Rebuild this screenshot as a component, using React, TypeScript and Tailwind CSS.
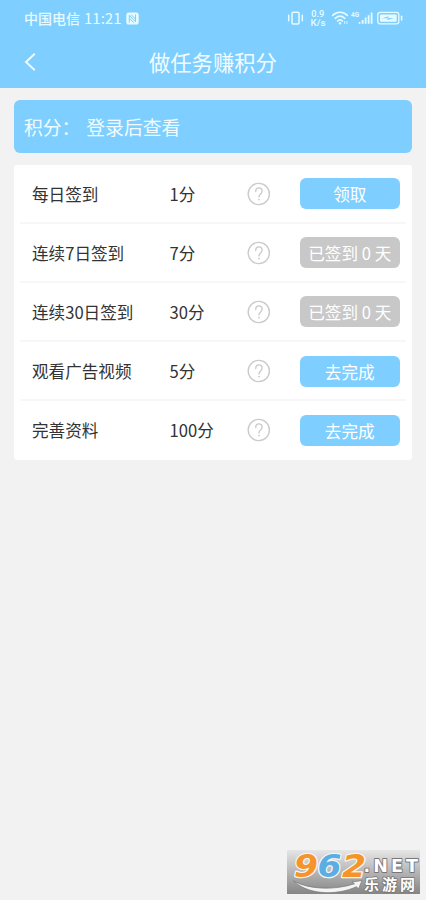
type Task = {
  name: string
  points: number
  action: string
  disabled?: boolean
}

const tasks: Task[] = [
  { name: "每日签到", points: 1, action: "领取" },
  { name: "连续7日签到", points: 7, action: "已签到 0 天", disabled: true },
  { name: "连续30日签到", points: 30, action: "已签到 0 天", disabled: true },
  { name: "观看广告视频", points: 5, action: "去完成" },
  { name: "完善资料", points: 100, action: "去完成" },
]

function StatusIcons() {
  return (
    <svg width="118" height="20" viewBox="286 8 118 20" fill="none" stroke="#e6fbff" strokeLinecap="round">
      {/* vibrate */}
      <rect x="292" y="12.3" width="7" height="11.6" rx="1.2" strokeWidth="1.5" />
      <path d="M288.7 15.2v5.6M302.3 15.2v5.6" strokeWidth="1.5" />
      {/* network speed */}
      <g fill="#e6fbff" stroke="none" fontFamily="Roboto, sans-serif" fontWeight="500">
        <text x="311.3" y="16.6" fontSize="9" textLength="13" lengthAdjust="spacingAndGlyphs">0.9</text>
        <text x="310.5" y="26.2" fontSize="9" textLength="15" lengthAdjust="spacingAndGlyphs">K/s</text>
        <text x="351" y="17" fontSize="7" fontWeight="700" textLength="8" lengthAdjust="spacingAndGlyphs">4G</text>
      </g>
      {/* wifi */}
      <path d="M332.7 15.3c4.3-4.1 10.3-4.1 14.6 0M335.2 18.3c2.9-2.6 6.7-2.6 9.6 0M337.6 21c1.5-1.4 3.3-1.4 4.8 0" strokeWidth="1.7" />
      <circle cx="340" cy="23.2" r="1.2" fill="#e6fbff" stroke="none" />
      <path d="M344.7 21.5v2M346.9 21.5v2" strokeWidth=".9" />
      {/* signal */}
      <path d="M359.5 22v1.8M362.6 20v3.8M365.6 17.6v6.2M368.6 15.2v8.6M371.6 12.5v11.3" strokeWidth="1.8" strokeLinecap="butt" />
      {/* battery */}
      <rect x="377.8" y="12.3" width="21" height="11.6" rx="2.4" strokeWidth="1.3" />
      <rect x="380" y="14.5" width="16.6" height="7.2" rx=".8" fill="#e6fbff" stroke="none" />
      <path d="M382 18.3l6.7-2-.7 1.6h6l-6.7 2.2.6-1.8z" fill="#7ecfff" stroke="none" />
      <path d="M401.6 16.2v3.8" strokeWidth="1.6" />
    </svg>
  )
}

function NfcIcon() {
  return (
    <svg className="ml-[5px]" width="13" height="13" viewBox="0 0 13 13" fill="none">
      <rect x=".3" y=".5" width="12.4" height="12" rx="2.6" fill="#e6fbff" />
      <path d="M3.3 10.6V3.2l6.2 6.6V2.4M5.2 2.6l4.3 4.6M3.3 6l4.3 4.600" stroke="#7ecfff" strokeWidth="1" />
    </svg>
  )
}

function HelpIcon() {
  return (
    <svg width="24" height="24" viewBox="0 0 24 24" fill="none" stroke="#cbcbcb" strokeLinecap="round">
      <circle cx="11.8" cy="12" r="10.6" strokeWidth="1.4" />
      <path d="M8.7 9.5c0-2.2 1.3-3.6 3.2-3.6s3.2 1.3 3.2 3.2c0 1.5-.8 2.2-1.7 3.1-.9.8-1.4 1.5-1.4 2.7" strokeWidth="1.4" />
      <circle cx="12" cy="17.6" r=".9" fill="#cbcbcb" stroke="none" />
    </svg>
  )
}

function TaskRow({ task }: { task: Task }) {
  return (
    <div className="mx-1.5 flex h-[59.2px] items-center border-b-2 border-[#f7f7f7] pt-px pl-3 text-[16.6px] text-[#333] last:border-transparent">
      <span className="w-[137.5px] pt-px">{task.name}</span>
      <span className="w-[77px] pt-px">{task.points}分</span>
      <HelpIcon />
      <button
        className={`ml-[29px] h-[31px] w-[100.5px] rounded-[6px] pt-px text-[16.6px] leading-[30px] whitespace-nowrap text-white ${task.disabled ? "bg-[#c8c8c8]" : "bg-[#7ecfff]"}`}
      >
        {task.action}
      </button>
    </div>
  )
}

function SiteBadge() {
  return (
    <svg className="absolute top-[850px] left-[287px] overflow-visible" width="133" height="44" viewBox="0 0 133 44">
      <defs>
        <linearGradient id="plate" x1="0" y1="0" x2="0" y2="1">
          <stop offset="0" stopColor="#e6e6e6" />
          <stop offset="1" stopColor="#858585" />
        </linearGradient>
      </defs>
      <rect width="133" height="44" fill="url(#plate)" />
      <path d="M6.500 31c15 8.500 41 9.500 61 2.800l-2.500-1.800 10-1.500-3.500 8.500-2-2.300C48 46.500 20 44 6.500 31z" fill="#f4f4f4" stroke="#777" strokeWidth=".7" />
      <g fontFamily="'DejaVu Sans', sans-serif" fontWeight="700" paintOrder="stroke" strokeLinejoin="round">
        <g fontSize="32" fontStyle="italic" stroke="#f5f5f5" strokeWidth="2.500">
          <text x="7" y="27.3" textLength="24" lengthAdjust="spacingAndGlyphs" fill="#f79428">9</text>
          <text x="30.5" y="27.3" textLength="24" lengthAdjust="spacingAndGlyphs" fill="#5aaee3">6</text>
          <text x="55" y="27.3" textLength="24" lengthAdjust="spacingAndGlyphs" fill="#f79428">2</text>
        </g>
        <text x="76.5" y="21.700" fontSize="17.500" textLength="54.500" fill="#fff" stroke="#777" strokeWidth="1.8">.NET</text>
        <text x="77" y="39.5" fontSize="15" textLength="51" fontFamily="'Noto Sans CJK SC', sans-serif" fill="#fff" stroke="#777" strokeWidth="1.6">乐游网</text>
      </g>
    </svg>
  )
}

export default function App() {
  return (
    <div className="relative h-[900px] w-[426px] overflow-hidden bg-[#f2f2f2] font-['Noto_Sans_CJK_SC',sans-serif]">
      <header className="h-[87.5px] bg-[#7ecfff] text-[#e6fbff]">
        <div className="flex h-9 items-center pl-6 text-[14px] font-medium">
          <span>中国电信</span>
          <span className="ml-1 text-[15px] font-normal">11:21</span>
          <NfcIcon />
          <div className="mr-[22px] ml-auto">
            <StatusIcons />
          </div>
        </div>
        <div className="flex h-[52px] items-center pl-6">
          <svg width="12" height="18" viewBox="0 0 12 18" fill="none" stroke="#f0fcff" strokeWidth="1.9">
            <path d="M10.8 .8L2 9l8.8 8.2" />
          </svg>
          <h1 className="ml-[113px] text-[21.3px] text-[#f0fcff]">做任务赚积分</h1>
        </div>
      </header>

      <main className="px-3.5 pt-3">
        <div className="flex h-[53.5px] items-center rounded-[6px] bg-[#7ecfff] pt-px pl-2.5 text-[18.8px] text-[#f0fcff]">
          <span>积分：</span>
          <span className="ml-1.5">登录后查看</span>
        </div>
        <div className="mt-[11.5px] rounded-[3px] bg-white">
          {tasks.map(task => (
            <TaskRow key={task.name} task={task} />
          ))}
        </div>
      </main>

      <SiteBadge />
    </div>
  )
}
